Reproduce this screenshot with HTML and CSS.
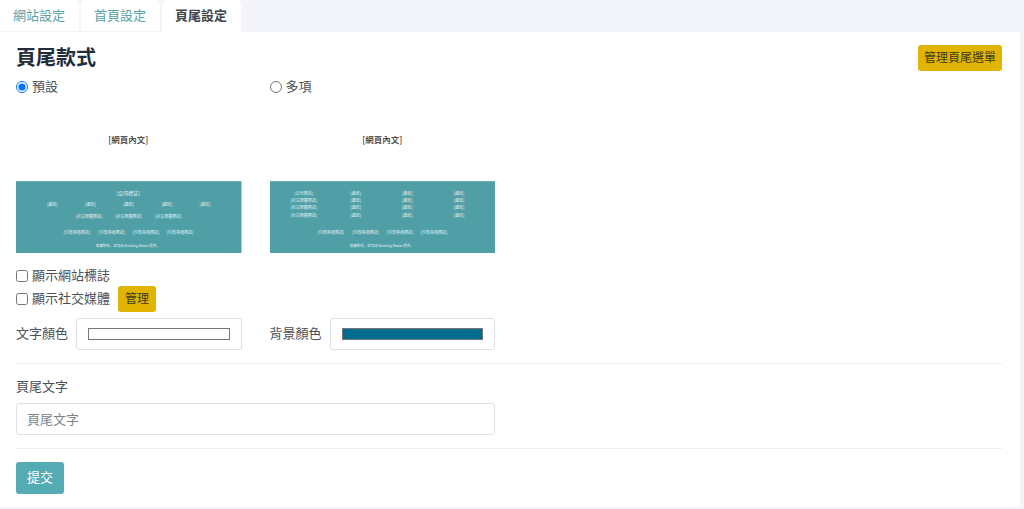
FILE: index.html
```html
<!DOCTYPE html>
<html lang="zh-Hant">
<head>
<meta charset="utf-8">
<meta name="viewport" content="width=device-width, initial-scale=1">
<title>頁尾設定</title>
<link rel="stylesheet" href="styles.css">
</head>
<body>
<nav class="tabs">
  <a class="tab" href="#site">網站設定</a>
  <a class="tab" href="#home">首頁設定</a>
  <a class="tab tab-active" href="#footer" aria-current="page">頁尾設定</a>
</nav>
<main class="panel">
  <header class="panel-head">
    <h1 class="title">頁尾款式</h1>
    <button class="btn btn-warning" type="button">管理頁尾選單</button>
  </header>
  <form class="form">
    <div class="grid">
      <div class="style-option">
        <div class="check">
          <input type="radio" name="style" id="style-default" checked>
          <label for="style-default">預設</label>
        </div>
        <svg class="preview" viewBox="0 0 900 624" role="img" aria-label="預設">
          <rect class="preview-footer" y="336" width="900" height="288"/>
          <text class="t-body" x="448" y="182">[網頁內文]</text>
          <text class="t-logo" x="448" y="391">[公司標誌]</text>
          <g class="t-item">
            <text x="145" y="436">[連結]</text><text x="297" y="436">[連結]</text><text x="449" y="436">[連結]</text><text x="602" y="436">[連結]</text><text x="754" y="436">[連結]</text>
            <text x="291" y="481">[社交媒體標誌]</text><text x="449" y="481">[社交媒體標誌]</text><text x="608" y="481">[社交媒體標誌]</text>
            <text x="243" y="545">[付款渠道標誌]</text><text x="381" y="545">[付款渠道標誌]</text><text x="519" y="545">[付款渠道標誌]</text><text x="655" y="545">[付款渠道標誌]</text>
          </g>
          <text class="t-copy" lang="zh-Hans" x="446" y="600">版權所有。並可由 Booking Radar 提供。</text>
        </svg>
      </div>
      <div class="style-option">
        <div class="check">
          <input type="radio" name="style" id="style-multi">
          <label for="style-multi">多項</label>
        </div>
        <svg class="preview" viewBox="0 0 900 624" role="img" aria-label="多項">
          <rect class="preview-footer" y="336" width="900" height="288"/>
          <text class="t-body" x="448" y="182">[網頁內文]</text>
          <g class="t-item">
            <text x="135" y="391">[公司標誌]</text><text x="135" y="420">[社交媒體標誌]</text><text x="135" y="448">[社交媒體標誌]</text><text x="135" y="477">[社交媒體標誌]</text>
            <text x="342" y="392">[連結]</text><text x="342" y="420">[連結]</text><text x="342" y="448">[連結]</text><text x="342" y="477">[連結]</text>
            <text x="548" y="392">[連結]</text><text x="548" y="420">[連結]</text><text x="548" y="448">[連結]</text><text x="548" y="477">[連結]</text>
            <text x="754" y="392">[連結]</text><text x="754" y="420">[連結]</text><text x="754" y="448">[連結]</text><text x="754" y="477">[連結]</text>
            <text x="243" y="545">[付款渠道標誌]</text><text x="381" y="545">[付款渠道標誌]</text><text x="519" y="545">[付款渠道標誌]</text><text x="655" y="545">[付款渠道標誌]</text>
          </g>
          <text class="t-copy" lang="zh-Hans" x="446" y="600">版權所有。並可由 Booking Radar 提供。</text>
        </svg>
      </div>
    </div>
    <div class="options">
      <div class="check">
        <input type="checkbox" id="show-logo">
        <label for="show-logo">顯示網站標誌</label>
      </div>
      <div class="check">
        <input type="checkbox" id="show-social">
        <label for="show-social">顯示社交媒體</label>
        <button class="btn btn-warning" type="button">管理</button>
      </div>
    </div>
    <div class="grid">
      <div class="color-field">
        <label for="text-color">文字顏色</label>
        <input class="control color" type="color" id="text-color" value="#ffffff">
      </div>
      <div class="color-field">
        <label for="bg-color">背景顏色</label>
        <input class="control color" type="color" id="bg-color" value="#006d8f">
      </div>
    </div>
    <hr class="rule">
    <div class="grid">
      <div class="text-field">
        <label for="footer-text">頁尾文字</label>
        <input class="control text" type="text" id="footer-text" placeholder="頁尾文字">
      </div>
    </div>
    <hr class="rule">
    <button class="btn btn-primary" type="submit">提交</button>
  </form>
</main>
</body>
</html>
```

FILE: styles.css
```css
* { box-sizing: border-box; }

body {
  margin: 0;
  padding-right: 4px;
  background: #f4f5fa;
  color: #4a5057;
  font: 13px/20px "Liberation Sans", "Noto Sans CJK TC", sans-serif;
}

.tabs { display: flex; gap: 2px; }

.tab {
  padding: 6px 14px 6px 13px;
  border-radius: 0 5px 0 0;
  background: #fff;
  box-shadow: inset 0 -1px #f4f5f8;
  color: #55a2a6;
  text-decoration: none;
}

.tab + .tab { border-radius: 5px 5px 0 0; }

.tab-active {
  box-shadow: none;
  color: #40454b;
  font-weight: 700;
}

.panel {
  padding: 12px 18px 13px 16px;
  background: #fff;
}

.panel-head {
  display: flex;
  align-items: center;
  justify-content: space-between;
}

.title {
  margin: 0;
  color: #212d3b;
  font-size: 20px;
  line-height: 28px;
}

.btn {
  border: 0;
  border-radius: 3px;
  font-family: inherit;
  cursor: pointer;
}

.btn-warning {
  padding: 4px 6px;
  background: #e0b400;
  color: #3c3a1c;
  font-size: 12px;
  line-height: 18px;
}

.btn-primary {
  padding: 6px 11px;
  background: #55abb4;
  color: #fff;
  font-size: 13px;
  line-height: 20px;
}

.grid {
  display: grid;
  grid-template-columns: repeat(4, 1fr);
  gap: 28px;
}

.check {
  display: flex;
  align-items: center;
  gap: 4px;
}

.check input {
  flex: none;
  width: 12px;
  height: 12px;
  margin: 0;
}

.check .btn {
  margin-left: 4px;
  padding: 4px 7px;
}

.style-option { padding-top: 5px; }

.preview {
  display: block;
  width: 100%;
  font-family: "Noto Sans CJK TC", sans-serif;
  text-anchor: middle;
}

.preview-footer { fill: #509fa7; }
.t-body { fill: #333; font-size: 34px; font-weight: 500; }
.t-logo { fill: #e4f1f2; font-size: 20px; }
.t-item { fill: #e4f1f2; font-size: 16px; }
.t-copy { fill: #e4f1f2; font-family: "Noto Sans CJK SC", sans-serif; font-size: 14px; }

.options {
  padding: 13px 0 6px;
}

.color-field {
  display: flex;
  align-items: center;
  gap: 8px;
}

.color-field label { flex: none; }

.control {
  min-width: 0;
  height: 32px;
  border: 1px solid #dde1e7;
  border-radius: 3px;
  background: #fff;
  font: inherit;
}

.color {
  flex: 1;
  padding: 5px 9px;
}

.text {
  width: 100%;
  padding: 5px 10px;
}

.text::placeholder { color: #7d8389; }

.text-field {
  display: grid;
  grid-column: span 2;
  gap: 6px;
}

.rule {
  margin: 13px 0;
  border: 0;
  border-top: 1px solid #f0f0f1;
}
```
